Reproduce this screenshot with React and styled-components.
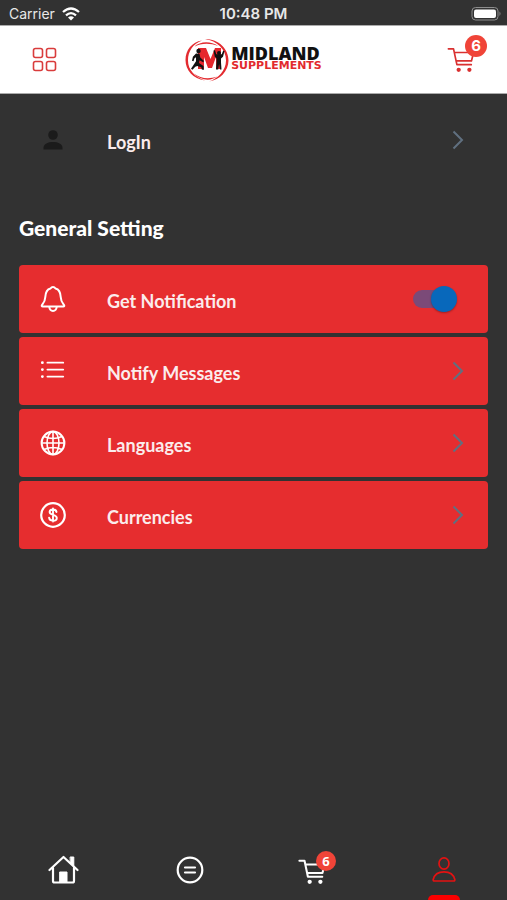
import React, { useState } from "react";
import styled, { createGlobalStyle } from "styled-components";

const Global = createGlobalStyle`
  * { box-sizing: border-box; }
  body { margin: 0; background: #323232; }
  button { font: inherit; color: inherit; background: none; border: 0; padding: 0; cursor: pointer; }
`;

const Screen = styled.div`
  display: flex;
  flex-direction: column;
  min-height: 100vh;
  background: #323232;
  color: #fff;
  font-family: "Lato", sans-serif;
`;

const StatusBar = styled.div`
  display: grid;
  grid-template-columns: 1fr auto 1fr;
  align-items: center;
  height: 25px;
  padding: 2px 5px 0;
  font: 400 14px/20px "Inter", sans-serif;
  color: #e8e8e8;
`;

const Carrier = styled.span`
  display: flex;
  align-items: center;
  gap: 7px;
  padding-left: 4px;
`;

const Clock = styled.time`
  font-size: 15px;
  font-weight: 600;
`;

const BatteryIcon = styled.svg`
  justify-self: end;
`;

const Header = styled.header`
  display: grid;
  grid-template-columns: 1fr auto 1fr;
  align-items: center;
  height: 69px;
  padding: 0 32px;
  background: #fff;
  border-top: 1px solid #ababab;
  border-bottom: 1px solid #ababab;
`;

const MenuButton = styled.button`
  justify-self: start;
  display: flex;
`;

const Brand = styled.a`
  display: flex;
  align-items: center;
  gap: 2px;
  color: #111;
  text-decoration: none;
`;

const BrandText = styled.span`
  display: flex;
  flex-direction: column;
  padding-bottom: 2px;
`;

const BrandName = styled.span`
  font: 800 18px/15px "Open Sans", sans-serif;
`;

const BrandTag = styled.span`
  font: 700 11px/10px "DejaVu Sans", sans-serif;
  color: #e22a2e;
`;

const CartButton = styled.button`
  position: relative;
  justify-self: end;
  display: flex;
  color: #d93030;
`;

const TabCartButton = styled(CartButton)`
  margin: 4px 10px 0 0;
  color: #fff;
`;

const Badge = styled.span`
  position: absolute;
  top: ${(p) => (p.$large ? -11 : -7)}px;
  right: ${(p) => (p.$large ? -12 : -10)}px;
  display: grid;
  place-items: center;
  width: ${(p) => (p.$large ? 22 : 20)}px;
  height: ${(p) => (p.$large ? 22 : 20)}px;
  border-radius: 50%;
  background: #f04438;
  color: #fff;
  font: 700 ${(p) => (p.$large ? "15px" : "13px")}/18px ${(p) => (p.$large ? '"Inter"' : '"Open Sans"')}, sans-serif;
`;

const Content = styled.main`
  flex: 1;
  padding: 12px 19px 0;
`;

const SectionTitle = styled.h1`
  margin: 38px 0 21px;
  font: 900 21px/32px "Lato", sans-serif;
`;

const Rows = styled.div`
  display: flex;
  flex-direction: column;
  gap: 4px;
`;

const Row = styled.button`
  display: grid;
  grid-template-columns: 68px 1fr auto;
  align-items: center;
  width: 100%;
  min-height: 68px;
  padding: 0 24px 0 20px;
  border-radius: 4px;
  background: ${(p) => (p.$plain ? "transparent" : "#e62d2f")};
  text-align: left;
  cursor: pointer;
`;

const RowIcon = styled.span`
  display: flex;
  justify-content: center;
  width: 28px;
  color: ${(p) => (p.$dark ? "#1b1b1b" : "#fff")};
`;

const RowLabel = styled.span`
  padding-top: 3px;
  font: 700 18px/24px "Lato", sans-serif;
  color: #fbecec;
`;

const Switch = styled.input`
  appearance: none;
  position: relative;
  display: flex;
  align-items: center;
  width: 44px;
  height: 26px;
  margin: 0 7px 0 0;
  cursor: pointer;

  &::before {
    content: "";
    width: 42px;
    height: 18px;
    border-radius: 9px;
    background: #7b4a78;
  }

  &::after {
    content: "";
    position: absolute;
    left: ${(p) => (p.checked ? 18 : 0)}px;
    width: 26px;
    height: 26px;
    border-radius: 50%;
    background: ${(p) => (p.checked ? "#0868bb" : "#ddd")};
    box-shadow: 0 1px 2px rgba(0, 0, 0, 0.3);
  }
`;

const TabBar = styled.nav`
  display: grid;
  grid-template-columns: repeat(4, 1fr);
  height: 60px;
`;

const Tab = styled.div`
  position: relative;
  display: flex;
  align-items: center;
  justify-content: center;
  color: ${(p) => (p.$active ? "#e31212" : "#fff")};

  &::after {
    content: "";
    display: ${(p) => (p.$active ? "block" : "none")};
    position: absolute;
    bottom: 0;
    width: 32px;
    height: 5px;
    border-radius: 5px 5px 0 0;
    background: #fb0000;
  }
`;

const TabButton = styled.button`
  display: flex;
`;

const Wifi = () => (
  <svg width="18" height="14" viewBox="0 0 18 14" fill="none" stroke="#fff" strokeWidth="2.3">
    <path d="M1 5Q9-2 17 5M4 8.3q5-4.4 10 0" />
    <path d="M6 10.4q3-2.5 6 0L9 13.5z" fill="#fff" stroke="none" />
  </svg>
);

const Battery = () => (
  <BatteryIcon width="31" height="16" viewBox="0 0 31 16" fill="none">
    <rect x="1" y="1.5" width="26" height="12.5" rx="3.5" stroke="#8c8c8c" />
    <rect x="3" y="3.5" width="22" height="8.5" rx="2" fill="#fff" />
    <path d="M28.5 5.5q2 2.2 0 4.5z" fill="#8c8c8c" />
  </BatteryIcon>
);

const GridIcon = () => (
  <svg width="25" height="25" viewBox="0 0 25 25" fill="none" stroke="#d93c3c" strokeWidth="1.6">
    <rect x="1.5" y="1.5" width="9" height="9" rx="2" />
    <rect x="14.5" y="1.5" width="9" height="9" rx="2" />
    <rect x="1.5" y="14.5" width="9" height="9" rx="2" />
    <rect x="14.5" y="14.5" width="9" height="9" rx="2" />
  </svg>
);

const BrandMark = () => (
  <svg width="44" height="44" viewBox="0 0 44 44">
    <path d="M17 2.500C7 4 .5 12 .5 22S8 41 20 42.500C10 39 3 32 3 22.500 3 13 8 6 17 2.500z" fill="#e32b30" />
    <path d="M20 1C34 1 43.500 11 43.500 22.500 43.500 33 35 42 24 43.500c9-3 17-11 17-21C41 11 32 3 20 1z" fill="#e32b30" />
    <path d="M9 9C15 3 26 3 33 8 25 5 16 5 9 9zM9 35.500c6 5 15 6 23 3-6 5-17 4-23-3z" fill="#e32b30" />
    <path d="M13 31V10h8l4.500 11L30 10h6v21h-5V19l-4 11h-4l-4-11v12z" fill="#e5272d" />
    <circle cx="13.500" cy="13" r="2.200" fill="#111" />
    <path d="M11 15.500l3.500.3.8 3.700 3.700 3.500-.8 1.200-3.700-2-.5 2.800 4.500 3 .3 4-2-.5-.5-2.200-4-1.300-2 .7-2.800 3-1.500-1 3-4.500 2-3v-4l-1.500 1-1 3-1.500-.4.900-4.100z" fill="#111" />
    <circle cx="34" cy="15" r="2" fill="#111" />
    <path d="M28.500 12.500l1.500-.3 1.200 4h5.600l1.300-3.500 1.400.3-1.500 5.800-2 1.700v4l.5 7H35l-.9-5.500-.9 5.500H31l.5-7v-4l-1.700-1.700z" fill="#111" />
  </svg>
);

const CartIcon = ({ weight = 2.2 }) => (
  <svg width="28" height="28" viewBox="0 0 30 30" fill="none" stroke="currentColor" strokeWidth={weight} strokeLinecap="round" strokeLinejoin="round">
    <path d="M1.500 3H7l3.600 17H26M8 7h20.500l-2.300 9H9.700" />
    <circle cx="12.500" cy="25.500" r="2.300" fill="currentColor" stroke="none" />
    <circle cx="24" cy="25.500" r="2.300" fill="currentColor" stroke="none" />
  </svg>
);

const PersonIcon = () => (
  <svg width="22" height="22" viewBox="0 0 22 22" fill="currentColor">
    <circle cx="11" cy="6" r="4.8" />
    <path d="M1.500 20.500v-1.800C1.500 11 20.500 11 20.500 18.700v1.800z" />
  </svg>
);

const BellIcon = () => (
  <svg width="28" height="28" viewBox="0 0 28 28" fill="none" stroke="currentColor" strokeWidth="2" strokeLinejoin="round">
    <path d="M14 2c-1.500 0-2 .7-2.500 1.500C7.500 4.500 6.500 8 6.300 12c-.2 4.500-1.300 5.500-3.300 8q-.8 1.500.7 1.500h20.600q1.500 0 .7-1.500c-2-2.500-3.100-3.500-3.300-8-.2-4-1.200-7.500-5.200-8.500C16 2.700 15.500 2 14 2z" />
    <path d="M10.300 22q.4 3.900 3.700 3.900t3.700-3.900" />
  </svg>
);

const ListIcon = () => (
  <svg width="26" height="24" viewBox="0 0 28 24" fill="none" stroke="currentColor" strokeWidth="2" strokeLinecap="round">
    <path d="M8 3h17M8 10.500h17M8 18h17" />
    <path d="M2.500 3h.1M2.500 10.500h.1M2.500 18h.1" strokeWidth="3" />
  </svg>
);

const GlobeIcon = () => (
  <svg width="26" height="26" viewBox="0 0 26 26" fill="none" stroke="currentColor" strokeWidth="1.600">
    <circle cx="13" cy="13" r="11.400" strokeWidth="2" />
    <ellipse cx="13" cy="13" rx="6" ry="11.400" />
    <path d="M13 1.500v23M1.500 13h23M4 6.500q9 4 18 0M4 19.500q9-4 18 0" />
  </svg>
);

const DollarIcon = () => (
  <svg width="28" height="28" viewBox="0 0 28 28" fill="none" stroke="currentColor" strokeWidth="2.200" strokeLinecap="round">
    <circle cx="14" cy="14" r="11.800" />
    <path d="M17.500 11q-.4-2.500-3.500-2.500t-3.400 2.400c0 3.800 7.200 2 7.200 6 0 1.700-1.400 2.800-3.800 2.800s-3.700-1.200-3.900-3M14 7.500v13" strokeWidth="1.900" />
  </svg>
);

const ChevronIcon = () => (
  <svg width="12" height="20" viewBox="0 0 12 20" fill="none" stroke="#607080" strokeWidth="2">
    <path d="M1.500 1.500l8.500 8.500-8.500 8.500" />
  </svg>
);

const HomeIcon = () => (
  <svg width="32" height="32" viewBox="0 0 32 32" fill="none" stroke="currentColor" strokeWidth="2.200" strokeLinecap="round" strokeLinejoin="round">
    <path d="M2.500 16L16.500 3l14 13M6 14v13q0 1.500 1.500 1.500h18q1.500 0 1.500-1.500V14" />
    <path d="M23.500 3h3.300v9l-3.300-3z" fill="currentColor" strokeWidth="1" />
    <path d="M13 18h7v10h-7z" fill="currentColor" strokeWidth="1" />
  </svg>
);

const CategoryIcon = () => (
  <svg width="28" height="28" viewBox="0 0 28 28" fill="none" stroke="currentColor" strokeWidth="2.200" strokeLinecap="round">
    <circle cx="14" cy="14" r="12.300" />
    <path d="M9 11.500h10M9 16.500h10" />
  </svg>
);

const AccountIcon = () => (
  <svg width="26" height="28" viewBox="0 0 26 28" fill="none" stroke="currentColor" strokeWidth="1.700" strokeLinejoin="round">
    <ellipse cx="13" cy="7.500" rx="5" ry="5.700" />
    <path d="M2.200 23.500C3.500 18 7 15.800 13 15.800s9.500 2.200 10.800 7.700q.3 1.500-1.300 1.500h-19q-1.600 0-1.300-1.500z" />
  </svg>
);

const links = [
  { label: "Notify Messages", Icon: ListIcon },
  { label: "Languages", Icon: GlobeIcon },
  { label: "Currencies", Icon: DollarIcon },
];

export default function App() {
  const [notify, setNotify] = useState(true);
  return (
    <Screen>
      <Global />
      <StatusBar>
        <Carrier>Carrier <Wifi /></Carrier>
        <Clock>10:48 PM</Clock>
        <Battery />
      </StatusBar>
      <Header>
        <MenuButton aria-label="Menu"><GridIcon /></MenuButton>
        <Brand href="#home">
          <BrandMark />
          <BrandText>
            <BrandName>MIDLAND</BrandName>
            <BrandTag>SUPPLEMENTS</BrandTag>
          </BrandText>
        </Brand>
        <CartButton aria-label="Cart, 6 items">
          <CartIcon weight={1.8} />
          <Badge $large>6</Badge>
        </CartButton>
      </Header>
      <Content>
        <Row $plain>
          <RowIcon $dark><PersonIcon /></RowIcon>
          <RowLabel>LogIn</RowLabel>
          <ChevronIcon />
        </Row>
        <SectionTitle>General Setting</SectionTitle>
        <Rows>
          <Row as="label" htmlFor="notify">
            <RowIcon><BellIcon /></RowIcon>
            <RowLabel>Get Notification</RowLabel>
            <Switch id="notify" type="checkbox" checked={notify} onChange={(e) => setNotify(e.target.checked)} />
          </Row>
          {links.map(({ label, Icon }) => (
            <Row key={label}>
              <RowIcon><Icon /></RowIcon>
              <RowLabel>{label}</RowLabel>
              <ChevronIcon />
            </Row>
          ))}
        </Rows>
      </Content>
      <TabBar>
        <Tab><TabButton aria-label="Home"><HomeIcon /></TabButton></Tab>
        <Tab><TabButton aria-label="Categories"><CategoryIcon /></TabButton></Tab>
        <Tab>
          <TabCartButton aria-label="Cart, 6 items">
            <CartIcon />
            <Badge>6</Badge>
          </TabCartButton>
        </Tab>
        <Tab $active><TabButton aria-label="Account"><AccountIcon /></TabButton></Tab>
      </TabBar>
    </Screen>
  );
}
